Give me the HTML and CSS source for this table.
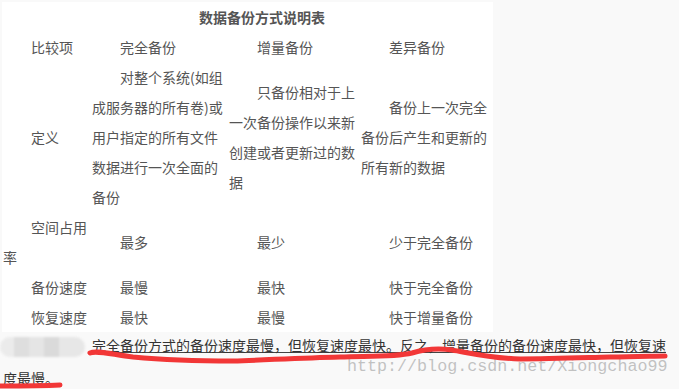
FILE: index.html
```html
<!DOCTYPE html>
<html lang="zh-CN">
<head>
    <meta charset="UTF-8">
    <meta name="viewport" content="width=device-width, initial-scale=1.0">
    <title>数据备份方式说明表</title>
    <link rel="stylesheet" href="styles.css">
</head>
<body>

    <!-- Comparison table -->
    <div class="sheet">
        <div class="caption">数据备份方式说明表</div>
        <table class="compare">
            <colgroup>
                <col class="c1">
                <col class="c2">
                <col class="c3">
                <col class="c4">
            </colgroup>
            <tr>
                <td>比较项</td>
                <td>完全备份</td>
                <td>增量备份</td>
                <td>差异备份</td>
            </tr>
            <tr>
                <td>定义</td>
                <td>对整个系统(如组成服务器的所有卷)或用户指定的所有文件数据进行一次全面的备份</td>
                <td>只备份相对于上一次备份操作以来新创建或者更新过的数据</td>
                <td>备份上一次完全备份后产生和更新的所有新的数据</td>
            </tr>
            <tr>
                <td>空间占用率</td>
                <td>最多</td>
                <td>最少</td>
                <td>少于完全备份</td>
            </tr>
            <tr>
                <td>备份速度</td>
                <td>最慢</td>
                <td>最快</td>
                <td>快于完全备份</td>
            </tr>
            <tr>
                <td>恢复速度</td>
                <td>最快</td>
                <td>最慢</td>
                <td>快于增量备份</td>
            </tr>
        </table>
    </div>

    <!-- Summary line -->
    <p class="note"><span class="smudge"></span><span class="under">完全备份方式的备份速度最慢，但恢复速度最快。反之，增量备份的备份速度最快，但恢复速度最慢。</span></p>

    <div class="watermark">http://blog.csdn.net/Xiongchao99</div>

    <!-- Red marker strokes -->
    <svg class="marker" width="679" height="389" viewBox="0 0 679 389">
        <path d="M90 353 C 96 350, 110 354, 133 357 C 165 360, 200 361, 233 361 C 265 360, 300 358, 340 357 C 370 356, 395 357, 412 353 C 425 349, 438 348, 452 350 C 470 353, 490 358, 520 359 C 550 359, 575 358, 610 357 C 635 357, 655 356, 665 356"
              fill="none" stroke="#f23737" stroke-width="5" stroke-linecap="round"/>
        <path d="M-2 386 C 20 386, 40 386, 60 385"
              fill="none" stroke="#f23737" stroke-width="5" stroke-linecap="round"/>
    </svg>

</body>
</html>
```

FILE: styles.css
```css
html, body {
    margin: 0;
    padding: 0;
}

body {
    position: relative;
    width: 679px;
    height: 389px;
    overflow: hidden;
    background-color: #f9f9f9;
    font-family: "Noto Sans CJK SC", "Noto Sans", sans-serif;
    font-size: 14px;
    color: #555;
}

.sheet {
    width: 490px;
    margin: 2px 0 0 2px;
    padding-left: 1px;
    background-color: #fff;
}

.caption {
    font-weight: bold;
    line-height: 30px;
    text-align: center;
    text-indent: 2em;
}

.compare {
    table-layout: fixed;
    width: 489px;
    border-collapse: collapse;
}

.compare col.c1 { width: 89px; }
.compare col.c2 { width: 137px; }
.compare col.c3 { width: 132px; }
.compare col.c4 { width: 131px; }

.compare td {
    padding: 0;
    line-height: 30px;
    text-indent: 2em;
    vertical-align: middle;
}

.note {
    margin: -3px 0 0;
    padding: 0 3px;
    line-height: 33px;
    color: #333;
}

.smudge {
    display: inline-block;
    width: 85px;
    height: 20px;
    margin: 0 7px 0 -3px;
    vertical-align: middle;
    border-radius: 10px;
    background: linear-gradient(90deg, #ebebeb 0 16%, #dedede 16% 34%, #e5e5e5 34% 52%, #dadada 52% 70%, #e7e7e7 70% 100%);
    filter: blur(1px);
}

.under {
    text-decoration: underline;
    text-decoration-color: #444;
}

.watermark {
    position: absolute;
    left: 347px;
    top: 356px;
    font-family: "Liberation Mono", monospace;
    font-size: 16.7px;
    line-height: 22px;
    color: rgba(175, 175, 175, 0.75);
    white-space: nowrap;
}

.marker {
    position: absolute;
    left: 0;
    top: 0;
    pointer-events: none;
}
```
